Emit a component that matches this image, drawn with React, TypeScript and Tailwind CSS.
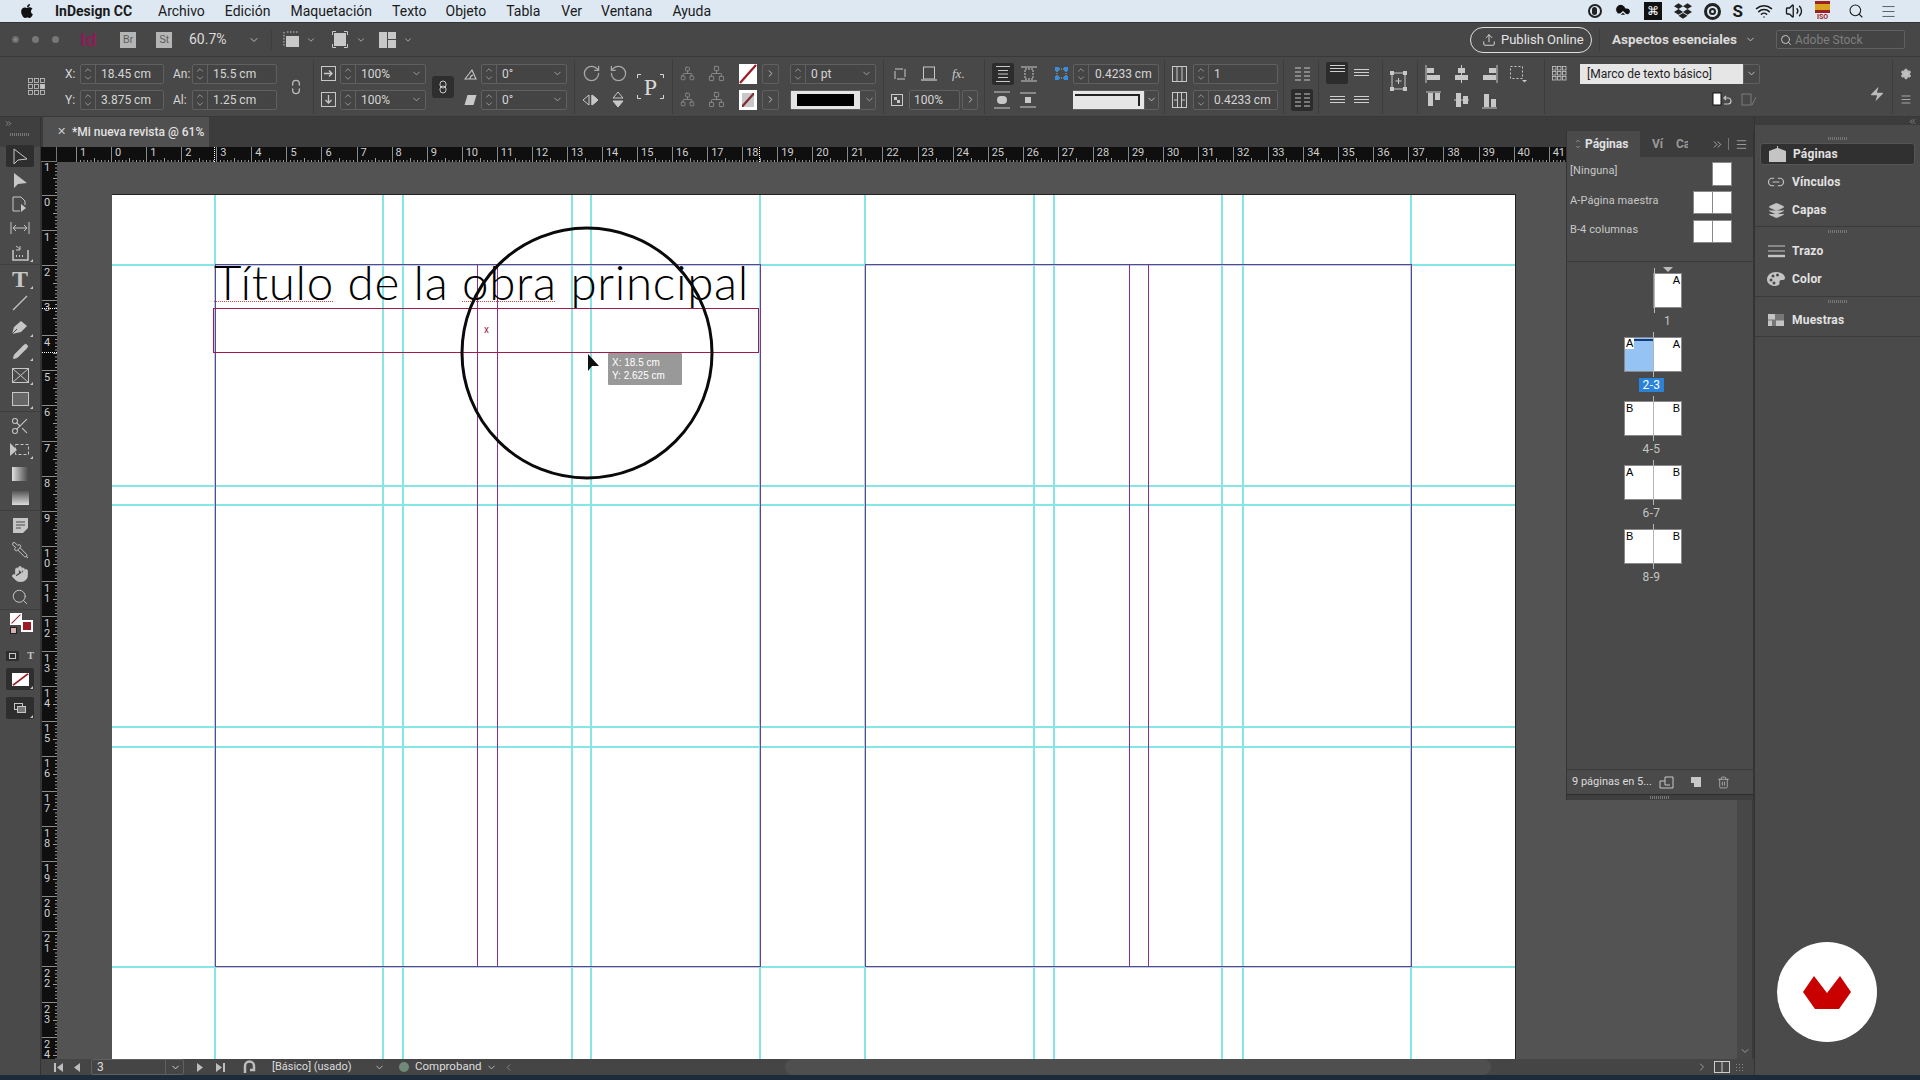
import React from "react";
import { FaApple, FaDropbox } from "react-icons/fa";
import {
  ChevronDown,
  ChevronRight,
  ChevronLeft,
  ChevronUp,
  ChevronsLeft,
  ChevronsRight,
  Search,
  Wifi,
  Volume2,
  Upload,
  Scissors,
  Hand,
  Pipette,
  Pencil,
  RotateCw,
  RotateCcw,
  Network,
  Settings,
  Zap,
  Menu,
  Trash2,
  CloudUpload,
  Unlink2,
  Layers,
  Link2,
} from "lucide-react";

const cyanV = [215, 383, 403, 572, 591, 760, 865, 1034, 1054, 1222, 1243, 1411];
const cyanH = [265, 486, 505, 727, 747, 967];
const purpleV = [215, 477, 497, 760, 865, 1129, 1148, 1411];
const menus = [
  ["Archivo", "ml-[20px]"],
  ["Edición", "ml-[20px]"],
  ["Maquetación", "ml-[20px]"],
  ["Texto", "ml-[20px]"],
  ["Objeto", "ml-[19px]"],
  ["Tabla", "ml-[20px]"],
  ["Ver", "ml-[21px]"],
  ["Ventana", "ml-[19px]"],
  ["Ayuda", "ml-[20px]"],
];

const Carets = () => (
  <div className="w-[15px] h-full border-r border-[#606060] flex flex-col items-center justify-center text-[#c4c4c4] shrink-0">
    <ChevronUp size={10} strokeWidth={1.5} className="-mb-[1px]" />
    <ChevronDown size={10} strokeWidth={1.5} className="-mt-[1px]" />
  </div>
);

const Field = ({ value, w, drop, pl = "pl-[5px]" }: { value: string; w: string; drop?: boolean; pl?: string }) => (
  <div className={`${w} h-[20px] flex items-center border border-[#606060] rounded-[2px] bg-[#444444] shrink-0`}>
    <Carets />
    <span className={`${pl} flex-1 text-[12px] text-[#d6d6d6] leading-none whitespace-nowrap`}>{value}</span>
    {drop && <ChevronDown size={11} strokeWidth={1.5} className="text-[#c4c4c4] mr-[3px]" />}
  </div>
);

const Col = ({ className, children, sep }: { className: string; children: React.ReactNode; sep?: boolean }) => (
  <div className={`${className} relative h-[46px] flex flex-col justify-between shrink-0`}>
    {sep && <div className="absolute -left-[8px] -top-[4px] -bottom-[4px] w-px bg-[#3d3d3d]" />}
    {children}
  </div>
);

const Row = ({ children, className = "" }: { children?: React.ReactNode; className?: string }) => (
  <div className={`h-[20px] flex items-center ${className}`}>{children}</div>
);

const Ico = ({ w = 16, h = 16, children, className = "" }: { w?: number; h?: number; children: React.ReactNode; className?: string }) => (
  <svg width={w} height={h} viewBox={`0 0 ${w} ${h}`} fill="none" stroke="currentColor" className={`shrink-0 ${className}`}>
    {children}
  </svg>
);

const NoneSwatch = ({ className }: { className: string }) => (
  <svg viewBox="0 0 18 20" className={className} preserveAspectRatio="none">
    <rect width="18" height="20" fill="#fff" />
    <line x1="1" y1="19" x2="17" y2="1" stroke="#9c1c26" strokeWidth="2.2" />
  </svg>
);

const RefPoint = () => (
  <Ico w={19} h={19} className="text-[#c8c8c8]">
    {[1, 7, 13].flatMap((y) =>
      [1, 7, 13].map((x) => <rect key={`${x}-${y}`} x={x + 0.5} y={y + 0.5} width="4" height="4" strokeWidth="0.8" fill={x === 13 && y === 7 ? "#c8c8c8" : "none"} />)
    )}
  </Ico>
);

const Lines = ({ top, dark }: { top?: boolean; dark?: boolean }) => (
  <div className={`w-[22px] h-[22px] flex flex-col items-center gap-[2px] ${top ? "justify-start pt-[3px]" : "justify-center"} rounded-[2px] ${dark ? "bg-[#2c2c2c]" : ""}`}>
    <div className="w-[15px] h-px bg-[#d0d0d0]" />
    <div className="w-[15px] h-px bg-[#d0d0d0]" />
    <div className="w-[15px] h-px bg-[#d0d0d0]" />
  </div>
);

const AlignIco = ({ variant }: { variant: number }) => (
  <Ico w={17} h={18} className="text-[#c8c8c8]">
    {variant === 0 && (<><line x1="1" y1="0" x2="1" y2="18" /><rect x="2" y="3" width="7" height="5" fill="currentColor" stroke="none" /><rect x="2" y="10" width="13" height="5" fill="currentColor" stroke="none" /></>)}
    {variant === 1 && (<><line x1="8.5" y1="0" x2="8.5" y2="18" /><rect x="5" y="3" width="7" height="5" fill="currentColor" stroke="none" /><rect x="2" y="10" width="13" height="5" fill="currentColor" stroke="none" /></>)}
    {variant === 2 && (<><line x1="16" y1="0" x2="16" y2="18" /><rect x="8" y="3" width="7" height="5" fill="currentColor" stroke="none" /><rect x="2" y="10" width="13" height="5" fill="currentColor" stroke="none" /></>)}
    {variant === 3 && (<><line x1="1" y1="1" x2="16" y2="1" /><rect x="3" y="2" width="5" height="13" fill="currentColor" stroke="none" /><rect x="10" y="2" width="5" height="7" fill="currentColor" stroke="none" /></>)}
    {variant === 4 && (<><line x1="1" y1="9" x2="16" y2="9" /><rect x="3" y="2" width="5" height="14" fill="currentColor" stroke="none" /><rect x="10" y="5" width="5" height="8" fill="currentColor" stroke="none" /></>)}
    {variant === 5 && (<><line x1="1" y1="17" x2="16" y2="17" /><rect x="3" y="3" width="5" height="13" fill="currentColor" stroke="none" /><rect x="10" y="8" width="5" height="8" fill="currentColor" stroke="none" /></>)}
  </Ico>
);

const MenuBar = () => (
  <div className="h-[22px] bg-[#dde8f2] flex items-center text-[14px] text-[#1a1a1a] shrink-0">
    <FaApple size={16} className="ml-[19px] text-[#111]" />
    <span className="ml-[20px] font-bold w-[83px] whitespace-nowrap">InDesign CC</span>
    {menus.map(([m, c]) => (
      <span key={m} className={c}>{m}</span>
    ))}
    <div className="ml-auto flex items-center text-[#1a1a1a] mr-[23px] gap-[12px]">
      <div className="w-[14px] h-[14px] rounded-full border-2 border-[#222] flex items-center justify-center"><div className="w-[5px] h-[8px] rounded-full bg-[#222]" /></div>
      <CloudUpload size={18} fill="#111" stroke="#dde8f2" strokeWidth={1.5} />
      <div className="w-[18px] h-[18px] bg-[#111] text-white text-[12px] flex items-center justify-center">⌘</div>
      <FaDropbox size={18} className="text-[#222]" />
      <div className="w-[17px] h-[17px] rounded-full border-[3px] border-[#222] flex items-center justify-center"><div className="w-[7px] h-[7px] rounded-full border-2 border-[#222]" /></div>
      <span className="text-[17px] font-bold leading-none">S</span>
      <Wifi size={18} strokeWidth={2} />
      <Volume2 size={18} strokeWidth={1.8} />
      <div className="w-[15px] h-[20px] flex flex-col items-center leading-none">
        <div className="w-[15px] h-[12px] bg-[#d9a520] border-y-[3px] border-[#a02020]" />
        <span className="text-[7px] font-bold text-[#a02020] mt-[1px]">ISO</span>
      </div>
      <Search size={16} strokeWidth={1.6} className="ml-[6px]" />
      <Menu size={17} strokeWidth={1.3} className="ml-[4px] text-[#555]" />
    </div>
  </div>
);

const Small = ({ children, className = "" }: { children: React.ReactNode; className?: string }) => (
  <div className={`w-[16px] h-[16px] bg-[#b5b5b5] text-[#5a5a5a] text-[10px] flex items-center justify-center font-['Liberation_Sans',sans-serif] ${className}`}>{children}</div>
);

const AppBar = () => (
  <div className="h-[35px] bg-[#474747] border-t border-[#333] border-b border-b-[#383838] flex items-center shrink-0">
    <div className="ml-[12px] w-[7px] h-[7px] rounded-full bg-[#8a8a8a] border-2 border-[#6e6e6e]" />
    <div className="ml-[13px] w-[7px] h-[7px] rounded-full bg-[#777]" />
    <div className="ml-[13px] w-[7px] h-[7px] rounded-full bg-[#777]" />
    <span className="ml-[21px] w-[20px] text-[19px] font-bold text-[#8c1d56] font-['Liberation_Sans',sans-serif] leading-none">Id</span>
    <Small className="ml-[20px]">Br</Small>
    <Small className="ml-[20px]">St</Small>
    <span className="ml-[17px] w-[40px] text-[14px] text-[#dcdcdc]">60.7%</span>
    <ChevronDown size={12} className="ml-[19px] text-[#bbb]" />
    <div className="ml-[11px] w-px h-[20px] bg-[#3d3d3d]" />
    <Ico w={17} h={17} className="ml-[11px] text-[#c8c8c8]">
      <rect x="3" y="5" width="13" height="11" fill="currentColor" stroke="none" />
      <path d="M1 1v15M4 1h12" strokeDasharray="1.5 1.5" />
    </Ico>
    <ChevronDown size={10} className="ml-[6px] text-[#bbb]" />
    <Ico w={16} h={17} className="ml-[16px] text-[#c8c8c8]">
      <rect x="2" y="2" width="12" height="13" fill="currentColor" stroke="none" />
      <path d="M0.5 4V.5H4M12 .5h3.5V4M15.5 13v3.5H12M4 16.5H.5V13" strokeWidth="1" />
    </Ico>
    <ChevronDown size={10} className="ml-[8px] text-[#bbb]" />
    <Ico w={17} h={16} className="ml-[13px] text-[#c8c8c8]">
      <rect x="0" y="0" width="8" height="16" fill="currentColor" stroke="none" />
      <rect x="9" y="0" width="8" height="7" fill="currentColor" stroke="none" />
      <rect x="9" y="8" width="8" height="8" fill="currentColor" stroke="none" />
    </Ico>
    <ChevronDown size={10} className="ml-[7px] text-[#bbb]" />
    <div className="ml-auto flex items-center">
      <div className="w-[122px] h-[26px] rounded-full border border-[#e0e0e0] flex items-center pl-[11px] gap-[5px] text-[13px] text-[#e4e4e4]">
        <Upload size={14} strokeWidth={1.5} />
        <span className="whitespace-nowrap">Publish Online</span>
      </div>
      <div className="ml-[7px] w-px h-[22px] bg-[#3d3d3d]" />
      <span className="ml-[12px] text-[13.5px] font-bold text-[#dcdcdc] whitespace-nowrap w-[124px]">Aspectos esenciales</span>
      <ChevronDown size={11} className="ml-[9px] text-[#ccc]" />
      <div className="ml-[20px] mr-[15px] w-[129px] h-[19px] border border-[#606060] rounded-[2px] bg-[#444] flex items-center pl-[3px] gap-[3px] text-[12px] text-[#7e7e7e]">
        <Search size={12} className="text-[#c8c8c8]" />
        <span>Adobe Stock</span>
      </div>
    </div>
  </div>
);

const ControlPanel = () => (
  <div className="h-[60px] bg-[#484848] border-b border-[#383838] flex items-center shrink-0 text-[#c8c8c8]">
    <div className="ml-[27px] w-[19px] shrink-0"><RefPoint /></div>
    <Col className="ml-[19px] w-[99px]">
      <Row><span className="w-[15px] text-[12px] text-[#d6d6d6]">X:</span><Field value="18.45 cm" w="w-[84px]" /></Row>
      <Row><span className="w-[15px] text-[12px] text-[#d6d6d6]">Y:</span><Field value="3.875 cm" w="w-[84px]" /></Row>
    </Col>
    <Col className="ml-[9px] w-[104px]">
      <Row><span className="w-[19px] text-[12px] text-[#d6d6d6]">An:</span><Field value="15.5 cm" w="w-[85px]" /></Row>
      <Row><span className="w-[19px] text-[12px] text-[#d6d6d6]">Al:</span><Field value="1.25 cm" w="w-[85px]" /></Row>
    </Col>
    <div className="ml-[11px] w-[15px] shrink-0"><Unlink2 size={16} strokeWidth={2} className="rotate-90 text-[#bbb]" /></div>
    <Col className="ml-[18px] w-[105px]" sep>
      <Row>
        <Ico w={15} h={15} className="mr-[4px]"><rect x=".5" y=".5" width="14" height="14" strokeWidth="1" /><path d="M3 7.5h8M8 4.5l3 3-3 3" strokeWidth="1.3" /></Ico>
        <Field value="100%" w="w-[86px]" drop />
      </Row>
      <Row>
        <Ico w={15} h={15} className="mr-[4px]"><rect x=".5" y=".5" width="14" height="14" strokeWidth="1" /><path d="M7.5 3v8M4.5 8l3 3 3-3" strokeWidth="1.3" /></Ico>
        <Field value="100%" w="w-[86px]" drop />
      </Row>
    </Col>
    <div className="ml-[6px] w-[22px] h-[22px] bg-[#2e2e2e] rounded-[3px] flex items-center justify-center shrink-0">
      <Ico w={8} h={14} className="text-[#c8c8c8]"><rect x="1" y="1" width="6" height="7" rx="3" /><rect x="1" y="6" width="6" height="7" rx="3" /></Ico>
    </div>
    <Col className="ml-[10px] w-[103px]">
      <Row>
        <Ico w={13} h={12} className="mr-[4px]"><path d="M1 11h11L8 2zM6 11a4 4 0 0 1 3-4" strokeWidth="1.1" /></Ico>
        <Field value="0°" w="w-[86px]" drop />
      </Row>
      <Row>
        <Ico w={13} h={12} className="mr-[4px]"><path d="M3.5 1h9L9.5 11h-9z" fill="currentColor" stroke="none" /></Ico>
        <Field value="0°" w="w-[86px]" drop />
      </Row>
    </Col>
    <Col className="ml-[15px] w-[46px]" sep>
      <Row className="justify-between text-[#a8a8a8]"><RotateCw size={19} strokeWidth={1.6} /><RotateCcw size={19} strokeWidth={1.6} /></Row>
      <Row className="justify-between">
        <Ico w={17} h={14}><path d="M7 2v10L1 7zM10 2v10l6-5z" strokeWidth="1" /><path d="M10 2v10l6-5z" fill="currentColor" /></Ico>
        <Ico w={14} h={17} className="mr-[3px]"><path d="M2 7h10L7 1z" strokeWidth="1" /><path d="M2 10h10l-5 6z" fill="currentColor" /></Ico>
      </Row>
    </Col>
    <div className="ml-[9px] w-[27px] h-[25px] relative flex items-center justify-center text-[24px] leading-none text-[#d8d8d8] font-['Liberation_Serif',serif] border-0 shrink-0">
      P
      <Ico w={27} h={25} className="absolute inset-0"><path d="M.5 4V.5H4M23 .5h3.5V4M26.5 21v3.5H23M4 24.5H.5V21" /></Ico>
    </div>
    <Col className="ml-[16px] w-[45px]" sep>
      <Row className="justify-between text-[#8a8a8a]"><Network size={15} strokeWidth={1.4} /><Network size={17} strokeWidth={1.4} /></Row>
      <Row className="justify-between text-[#8a8a8a]"><Network size={15} strokeWidth={1.4} /><Network size={17} strokeWidth={1.4} /></Row>
    </Col>
    <Col className="ml-[14px] w-[40px]">
      <Row className="justify-between">
        <NoneSwatch className="w-[18px] h-[20px]" />
        <div className="w-[17px] h-[20px] border border-[#606060] rounded-[2px] flex items-center justify-center"><ChevronRight size={11} /></div>
      </Row>
      <Row className="justify-between">
        <div className="w-[18px] h-[20px] border-[3px] border-white bg-[#484848] relative overflow-hidden"><NoneSwatch className="w-[18px] h-[20px] -m-[3px] opacity-70" /></div>
        <div className="w-[17px] h-[20px] border border-[#606060] rounded-[2px] flex items-center justify-center"><ChevronRight size={11} /></div>
      </Row>
    </Col>
    <Col className="ml-[11px] w-[86px]">
      <Field value="0 pt" w="w-[86px]" drop />
      <div className="h-[20px] flex items-center border border-[#606060] rounded-[2px]">
        <div className="w-[70px] h-full bg-[#e4e4e4] flex items-center justify-center"><div className="w-[57px] h-[12px] bg-black" /></div>
        <ChevronDown size={11} strokeWidth={1.5} className="ml-[4px]" />
      </div>
    </Col>
    <Col className="ml-[15px] w-[87px]" sep>
      <Row className="pl-[3px]">
        <Ico w={12} h={14}><rect x="1" y="2" width="10" height="10" strokeDasharray="8 2" /></Ico>
        <Ico w={16} h={15} className="ml-[15px]"><rect x="2.5" y="1" width="11" height="12" /><path d="M0 14h16" stroke="#999" strokeWidth="2" /></Ico>
        <span className="ml-[15px] text-[13px] italic font-['Liberation_Serif',serif]">fx.</span>
      </Row>
      <Row>
        <Ico w={12} h={12} className="mr-[6px]"><rect x=".5" y=".5" width="11" height="11" /><path d="M3 3h3v3H3zM6 6h3v3H6z" fill="currentColor" stroke="none" /></Ico>
        <div className="w-[51px] h-[20px] border border-[#606060] rounded-[2px] bg-[#444] pl-[4px] text-[12px] leading-[18px] text-[#d6d6d6]">100%</div>
        <div className="ml-[2px] w-[16px] h-[20px] border border-[#606060] rounded-[2px] flex items-center justify-center"><ChevronRight size={11} /></div>
      </Row>
    </Col>
    <Col className="ml-[14px] w-[45px]" sep>
      <Row className="gap-[7px]">
        <div className="w-[22px] h-[22px] rounded-[2px] bg-[#2c2c2c] flex items-center justify-center">
          <Ico w={14} h={16}><path d="M0 .5h14M0 15.5h14M2 4.5h10M2 8h10M2 11.5h10" /></Ico>
        </div>
        <Ico w={16} h={16}><path d="M0 1h16M0 15h16" /><rect x="4" y="3" width="8" height="10" strokeDasharray="2 1" /></Ico>
      </Row>
      <Row className="gap-[7px] pl-[2px]">
        <Ico w={16} h={18} className="mr-[3px]"><path d="M0 1h16M0 17h16" /><rect x="3" y="5" width="10" height="8" rx="4" fill="currentColor" stroke="none" /></Ico>
        <Ico w={16} h={16}><path d="M0 1h16M0 15h16" /><rect x="5" y="5" width="6" height="6" fill="currentColor" stroke="none" /></Ico>
      </Row>
    </Col>
    <Col className="ml-[17px] w-[105px]">
      <Row>
        <Ico w={15} h={15} className="mr-[4px] text-[#2f8fe6]"><path d="M1 1h4v4H1zM10 1h4v4h-4zM1 10h4v4H1zM10 10h4v4h-4z" fill="currentColor" stroke="none" /><path d="M3 5v5M12 5v5M5 3h5M5 12h5" stroke="#aaa" strokeDasharray="1 1" /></Ico>
        <Field value="0.4233 cm" w="w-[86px]" pl="pl-[6px]" />
      </Row>
      <Row className="pl-[19px]">
        <div className="w-[71px] h-[20px] bg-[#e6e6e6] border-y border-[#606060] relative">
          <div className="absolute left-[2px] right-[4px] top-[3px] h-[2px] bg-[#222]" />
          <div className="absolute right-[4px] top-[3px] bottom-[3px] w-[2px] bg-[#222]" />
        </div>
        <div className="w-[15px] h-[20px] border border-[#606060] rounded-r-[2px] flex items-center justify-center"><ChevronDown size={11} /></div>
      </Row>
    </Col>
    <Col className="ml-[13px] w-[106px]" sep>
      <Row>
        <Ico w={15} h={16} className="mr-[6px]"><rect x=".5" y=".5" width="14" height="15" /><path d="M5 .5v15M10 .5v15" /></Ico>
        <Field value="1" w="w-[85px]" />
      </Row>
      <Row>
        <Ico w={15} h={16} className="mr-[6px]"><rect x=".5" y=".5" width="14" height="15" /><path d="M5.5 .5v15M9.5 .5v15M2 8h3M10 8h3" /></Ico>
        <Field value="0.4233 cm" w="w-[85px]" />
      </Row>
    </Col>
    <Col className="ml-[13px] w-[22px]" sep>
      <Row className="justify-center"><Ico w={15} h={14}><path d="M0 1h6M9 1h6M0 5h6M9 5h6M0 9h6M9 9h6M0 13h6M9 13h6" /></Ico></Row>
      <Row className="justify-center">
        <div className="w-[22px] h-[22px] rounded-[2px] bg-[#2c2c2c] flex items-center justify-center"><Ico w={15} h={14}><path d="M0 1h6M9 1h6M0 5h6M9 5h6M0 9h6M9 9h6M0 13h6M9 13h6" /></Ico></div>
      </Row>
    </Col>
    <Col className="ml-[13px] w-[46px]" sep>
      <Row className="justify-between items-end"><Lines top dark /><Lines /></Row>
      <Row className="justify-between"><Lines /><Lines /></Row>
    </Col>
    <Col className="ml-[18px] w-[17px]" sep>
      <Row className="h-[30px] mt-[2px]">
        <Ico w={17} h={24}><rect x="2" y="4" width="13" height="16" /><rect x="0" y="2" width="4" height="4" fill="currentColor" stroke="none" /><rect x="13" y="2" width="4" height="4" fill="currentColor" stroke="none" /><rect x="0" y="18" width="4" height="4" fill="currentColor" stroke="none" /><rect x="13" y="18" width="4" height="4" fill="currentColor" stroke="none" /><path d="M8.5 9v6M5.5 12h6" /></Ico>
      </Row>
    </Col>
    <Col className="ml-[18px] w-[101px]" sep>
      <Row className="gap-[11px]">
        <AlignIco variant={0} />
        <AlignIco variant={1} />
        <AlignIco variant={2} />
        <Ico w={18} h={18}><rect x="1.5" y="1.5" width="12" height="12" strokeDasharray="2 2" /><path d="M13 15l2.5 2.5L18 15z" fill="currentColor" stroke="none" /></Ico>
      </Row>
      <Row className="gap-[11px]">
        <AlignIco variant={3} />
        <AlignIco variant={4} />
        <AlignIco variant={5} />
      </Row>
    </Col>
    <Col className="ml-[26px] w-[208px]" sep>
      <Row>
        <div className="w-[28px]"><Ico w={15} h={15}>{[0, 5, 10].flatMap((y) => [0, 5, 10].map((x) => <rect key={`${x}${y}`} x={x + 0.5} y={y + 0.5} width="3.5" height="3.5" strokeWidth="0.8" />))}</Ico></div>
        <div className="w-[163px] h-[20px] bg-[#e6e6e6] text-[12px] text-[#222] pl-[7px] leading-[20px] whitespace-nowrap">[Marco de texto básico]</div>
        <div className="w-[17px] h-[20px] border border-[#606060] rounded-r-[2px] flex items-center justify-center"><ChevronDown size={11} /></div>
      </Row>
      <Row className="justify-end gap-[9px] pr-[3px]">
        <Ico w={20} h={16}><rect x="1" y="1" width="8" height="12" fill="#fff" stroke="#111" /><path d="M12 12h4a3 3 0 0 0 0-6h-3M14 4l-2 2 2 2" strokeWidth="1.2" /></Ico>
        <Ico w={16} h={16} className="text-[#7a7a7a]"><rect x="1" y="2" width="9" height="11" /><path d="M11 13l4-8" /></Ico>
      </Row>
    </Col>
    <div className="ml-[112px] w-[10px] shrink-0 mt-[14px]"><Zap size={16} fill="#bbb" strokeWidth={0} className="-ml-[3px]" /></div>
    <Col className="ml-[18px] w-[12px]" sep>
      <Row className="justify-center"><Settings size={14} fill="#bbb" strokeWidth={1.5} /></Row>
      <Row className="justify-center"><Menu size={15} strokeWidth={1.5} /></Row>
    </Col>
  </div>
);

const Tool = ({ children, active, corner, className = "" }: { children: React.ReactNode; active?: boolean; corner?: boolean; className?: string }) => (
  <div className={`relative w-[28px] h-[22px] flex items-center justify-center text-[#c6c6c6] rounded-[2px] ${active ? "bg-[#2e2e2e]" : ""} ${className}`}>
    {children}
    {corner && <div className="absolute right-[1px] bottom-[1px] w-0 h-0 border-l-[3px] border-l-transparent border-b-[3px] border-b-[#c6c6c6]" />}
  </div>
);

const ToolSep = () => <div className="w-full h-px bg-[#3e3e3e] my-[1px]" />;

const Toolbar = () => (
  <div className="w-[41px] bg-[#4a4a4a] border-r border-[#343434] flex flex-col items-center shrink-0">
    <div className="h-[30px] w-full bg-[#3f3f3f] relative flex flex-col items-center">
      <ChevronsRight size={9} className="self-start ml-[4px] mt-[2px] text-[#999]" />
      <div className="w-[20px] h-[3px] mt-[5px] border-x-0 bg-[repeating-linear-gradient(90deg,#777_0,#777_1px,transparent_1px,transparent_2px)]" />
    </div>
    <div className="flex flex-col items-center mt-[-2px] w-full">
      <Tool active><Ico w={16} h={17}><path d="M2 1v15l4-4 9-1z" strokeWidth="1" /></Ico></Tool>
      <Tool className="mt-[2px]"><Ico w={16} h={17}><path d="M2 1v15l4-4 9-1z" fill="currentColor" stroke="none" /></Ico></Tool>
      <Tool className="mt-[2px]"><Ico w={16} h={17}><path d="M1 1h8l4 4v4M1 1v14h7" /><path d="M9 8v8l5-4z" fill="currentColor" stroke="none" /></Ico></Tool>
      <Tool className="mt-[2px]"><Ico w={20} h={14}><path d="M1 1v12M19 1v12M3 7h14M6 4L3 7l3 3M14 4l3 3-3 3" /></Ico></Tool>
      <Tool corner className="mt-[2px]"><Ico w={17} h={17}><path d="M1 6v10h15V6" strokeWidth="1.5" /><path d="M4 2l4 3M8 2v4H4" /><path d="M4 12h1M7 12h1M10 12h1" strokeWidth="2" /></Ico></Tool>
      <ToolSep />
      <Tool corner className="mt-[2px]"><span className="text-[24px] font-bold leading-none font-['Liberation_Serif',serif]">T</span></Tool>
      <Tool className="mt-[2px]"><Ico w={16} h={16}><line x1="1" y1="15" x2="15" y2="1" strokeWidth="1.2" /></Ico></Tool>
      <Tool corner className="mt-[2px]"><Ico w={18} h={16}><path d="M1 15l2-7 7-6 6 5-6 6z" fill="currentColor" stroke="none" /><path d="M1 15l5-5" stroke="#4a4a4a" /></Ico></Tool>
      <Tool corner className="mt-[2px]"><Pencil size={17} fill="#c6c6c6" strokeWidth={1.2} /></Tool>
      <Tool corner className="mt-[2px]"><Ico w={17} h={15}><rect x=".5" y=".5" width="16" height="14" /><path d="M.5 .5l16 14M16.5 .5l-16 14" /></Ico></Tool>
      <Tool corner className="mt-[2px]"><Ico w={17} h={14}><rect x=".5" y=".5" width="16" height="13" fill="#666" /></Ico></Tool>
      <ToolSep />
      <Tool className="mt-[2px]"><Scissors size={20} strokeWidth={1.3} /></Tool>
      <Tool corner className="mt-[1px]"><Ico w={20} h={15}><path d="M0 1v13l7-6z" fill="currentColor" stroke="none" /><rect x="5.5" y="2.5" width="13" height="10" strokeDasharray="3 2" /></Ico></Tool>
      <Tool className="mt-[3px]"><div className="w-[17px] h-[14px] bg-gradient-to-r from-[#e0e0e0] to-[#444]" /></Tool>
      <Tool className="mt-[2px]"><div className="w-[17px] h-[14px] bg-gradient-to-b from-[#555] via-[#999] to-[#ddd]" /></Tool>
      <ToolSep />
      <Tool className="mt-[2px]"><Ico w={15} h={15}><path d="M0 0h15v10l-5 5H0z" fill="currentColor" stroke="none" /><path d="M3 4h9M3 7h9M3 10h5" stroke="#4a4a4a" /></Ico></Tool>
      <Tool className="mt-[3px]"><Pipette size={18} strokeWidth={1.3} className="scale-x-[-1]" /></Tool>
      <Tool className="mt-[2px]"><Hand size={18} fill="#c6c6c6" strokeWidth={1} /></Tool>
      <Tool className="mt-[1px]"><Search size={18} strokeWidth={1.3} /></Tool>
      <ToolSep />
      <div className="relative w-[28px] h-[24px] mt-[2px]">
        <NoneSwatch className="absolute left-[4px] top-0 w-[12px] h-[12px] border border-white" />
        <div className="absolute left-[15px] top-[7px] w-[12px] h-[12px] border-[2px] border-white bg-[#9c1c26]" />
        <div className="absolute left-[4px] top-[14px] w-[7px] h-[7px] bg-[#d8b0b0] border border-[#222]" />
      </div>
      <div className="flex w-[28px] mt-[14px] h-[10px] items-center gap-[8px]">
        <div className="w-[14px] h-[10px] bg-[#2e2e2e] flex items-center justify-center"><div className="w-[7px] h-[6px] border border-[#c6c6c6]" /></div>
        <span className="text-[10px] font-bold text-[#c6c6c6] font-['Liberation_Serif',serif] leading-none">T</span>
      </div>
      <Tool corner active className="mt-[7px]"><NoneSwatch className="w-[17px] h-[13px]" /></Tool>
      <Tool corner active className="mt-[7px]"><Ico w={12} h={10}><rect x=".5" y=".5" width="8" height="6" /><rect x="3.5" y="3.5" width="8" height="6" fill="#777" /></Ico></Tool>
    </div>
  </div>
);

const HRuler = () => (
  <div className="h-[15px] bg-[#0f0f0f] flex shrink-0 overflow-hidden text-[#d0d0d0] relative">
    <div className="w-[16px] shrink-0 border-r border-[#777] border-b border-b-[#777]" />
    <div className="w-[19px] shrink-0" />
    {Array.from({ length: 43 }, (_, i) => i - 1).map((n) => (
      <div key={n} className="w-[35.07px] shrink-0 border-l border-[#8a8a8a] relative">
        <span className="absolute left-[3px] -top-[1px] text-[11px] leading-[14px]">{Math.abs(n)}</span>
        <svg width="35" height="4" className="absolute bottom-0 left-0" stroke="#9a9a9a">
          {[3.5, 7, 10.5, 14, 17.5, 21, 24.5, 28, 31.5].map((x) => (
            <line key={x} x1={x} x2={x} y1={x === 17.5 ? 0 : 2} y2={4} />
          ))}
        </svg>
      </div>
    ))}
    <div className="absolute left-[173px] top-0 bottom-0 w-px border-l border-dotted border-white" />
    <div className="absolute left-[718px] top-0 bottom-0 w-px border-l border-dotted border-white" />
  </div>
);

const VRuler = () => (
  <div className="w-[16px] bg-[#0f0f0f] flex flex-col shrink-0 overflow-hidden text-[#d0d0d0] relative border-l border-[#343434]">
    {Array.from({ length: 26 }, (_, i) => i - 1).map((n) => (
      <div key={n} className={`h-[35.07px] shrink-0 border-t border-[#8a8a8a] relative ${n === -1 ? "-mt-[2px]" : ""}`}>
        <div className="absolute left-[1px] top-[2px] flex flex-col items-center text-[11px] leading-[10px] w-[8px]">
          {String(Math.abs(n)).split("").map((d, i) => (
            <span key={i}>{d}</span>
          ))}
        </div>
        <svg width="4" height="35" className="absolute right-0 top-0" stroke="#9a9a9a">
          {[3.5, 7, 10.5, 14, 17.5, 21, 24.5, 28, 31.5].map((y) => (
            <line key={y} y1={y} y2={y} x1={y === 17.5 ? 0 : 2} x2={4} />
          ))}
        </svg>
      </div>
    ))}
    <div className="absolute left-0 right-0 top-[146px] h-px border-t border-dotted border-white" />
    <div className="absolute left-0 right-0 top-[190px] h-px border-t border-dotted border-white" />
  </div>
);

const Page = () => (
  <div className="absolute left-[55px] top-[32px] w-[1404px] h-[901px] bg-white border-t border-r border-[#222]">
    {cyanV.map((x) => (
      <div key={x} className="absolute top-0 bottom-0 w-[2px] bg-[#86e6e6]" style={{ left: x - 113 }} />
    ))}
    {cyanH.map((y) => (
      <div key={y} className="absolute left-0 right-0 h-[2px] bg-[#86e6e6]" style={{ top: y - 196 }} />
    ))}
    {purpleV.map((x) => (
      <div key={x} className="absolute w-px bg-[#8b2f8f] top-[69px] h-[703px]" style={{ left: x - 112 }} />
    ))}
    <div className="absolute left-[103px] top-[69px] w-[546px] h-px bg-[#8b2f8f]" />
    <div className="absolute left-[753px] top-[69px] w-[547px] h-px bg-[#8b2f8f]" />
    <div className="absolute left-[103px] top-[771px] w-[546px] h-px bg-[#8b2f8f]" />
    <div className="absolute left-[753px] top-[771px] w-[547px] h-px bg-[#8b2f8f]" />
    <div className="absolute left-[101px] top-[113px] w-[546px] h-[45px] border border-[#a01b4e]" />
    <span className="absolute left-[372px] top-[130px] text-[10px] leading-none text-[#a01b4e]">x</span>
    <div className="absolute left-[102px] top-[59px] whitespace-nowrap text-[47.5px] leading-[56px] tracking-[0.7px] font-['Lato',sans-serif] font-light text-black">
      <span className="underline decoration-dotted decoration-[#d04848] decoration-1 underline-offset-[1px]">Título</span> de la{" "}
      <span className="underline decoration-dotted decoration-[#d04848] decoration-1 underline-offset-[1px]">obra</span> principal
    </div>
    <svg width="256" height="256" className="absolute left-[347px] top-[30px]" fill="none" stroke="#0a0a0a" strokeWidth="3">
      <circle cx="128" cy="128" r="125" />
    </svg>
    <svg width="13" height="19" className="absolute left-[475px] top-[159px]">
      <path d="M1 0v17l4-5h7z" fill="#111" />
    </svg>
    <div className="absolute left-[496px] top-[158px] w-[74px] h-[32px] bg-[#999] rounded-[1px] pl-[4px] pt-[3px] text-[10px] leading-[13px] text-white font-['Liberation_Sans',sans-serif]">
      <div>X: 18.5 cm</div>
      <div>Y: 2.625 cm</div>
    </div>
  </div>
);

const StatusBar = () => (
  <div className="h-[16px] bg-[#454545] flex items-center shrink-0 text-[#bdbdbd]">
    <Ico w={9} h={9} className="ml-[13px]"><path d="M1 0v9" strokeWidth="2" /><path d="M9 0v9L3 4.5z" fill="currentColor" stroke="none" /></Ico>
    <Ico w={6} h={9} className="ml-[11px]"><path d="M6 0v9L0 4.5z" fill="currentColor" stroke="none" /></Ico>
    <div className="ml-[11px] w-[93px] h-[16px] flex border border-[#606060] rounded-[2px] text-[12px] leading-[14px] text-[#ddd]">
      <span className="w-[74px] pl-[5px] border-r border-[#606060]">3</span>
      <ChevronDown size={11} className="ml-[4px] mt-[2px]" />
    </div>
    <Ico w={6} h={9} className="ml-[13px]"><path d="M0 0v9l6-4.5z" fill="currentColor" stroke="none" /></Ico>
    <Ico w={9} h={9} className="ml-[13px]"><path d="M0 0v9l6-4.5z" fill="currentColor" stroke="none" /><path d="M8 0v9" strokeWidth="2" /></Ico>
    <Ico w={14} h={14} className="ml-[17px]"><path d="M3 13V6a4.5 4.5 0 0 1 9 0v4H8" strokeWidth="2.5" /></Ico>
    <span className="ml-[16px] w-[102px] text-[11px] text-[#ddd] whitespace-nowrap">[Básico] (usado)</span>
    <ChevronDown size={11} />
    <div className="ml-[14px] w-[10px] h-[10px] rounded-full bg-[#6f8a78]" />
    <span className="ml-[6px] w-[67px] overflow-hidden text-[11.5px] text-[#ddd] whitespace-nowrap">Comprobando</span>
    <ChevronDown size={11} className="ml-[4px]" />
    <ChevronLeft size={11} className="ml-[6px] text-[#888]" />
    <div className="ml-[271px] w-[706px] h-full bg-[#4f4f4f] rounded-full" />
    <ChevronRight size={12} className="ml-[205px] text-[#999]" />
    <Ico w={16} h={12} className="ml-[6px] text-[#ccc]"><rect x=".5" y=".5" width="15" height="11" /><path d="M8 .5v11" /></Ico>
    <div className="ml-[5px] w-[9px] h-[9px] bg-[radial-gradient(#888_1px,transparent_1px)] bg-[length:3px_3px]" />
  </div>
);

const DockItem = ({ icon, label, active }: { icon: React.ReactNode; label: string; active?: boolean }) => (
  <div className={`h-[22px] mx-[5px] my-[3px] flex items-center rounded-[3px] text-[#e2e2e2] ${active ? "bg-[#303030] border border-[#555]" : ""}`}>
    <div className="w-[32px] flex justify-center text-[#c4c4c4] shrink-0">{icon}</div>
    <span className="text-[12px] font-bold tracking-[0.2px]">{label}</span>
  </div>
);

const Grip = () => (
  <div className="h-[3px] w-[20px] mx-auto mt-[3px] bg-[repeating-linear-gradient(90deg,#777_0,#777_1px,transparent_1px,transparent_2px)]" />
);

const Dock = () => (
  <div className="w-[166px] shrink-0 flex flex-col border-l border-[#333]">
    <div className="h-[8px] bg-[#3c3c3c] flex justify-end items-start pr-[3px]">
      <ChevronsLeft size={9} className="text-[#999]" />
    </div>
    <div className="flex-1 bg-[#4a4a4a] flex flex-col relative">
      <div className="flex flex-col pt-[9px] border-b border-[#3a3a3a] pb-[2px]">
        <Grip />
        <DockItem active label="Páginas" icon={<Ico w={17} h={16}><path d="M0 5l8-3v14H0zM17 5L9 2v14h8z" fill="currentColor" stroke="none" /><path d="M8.5 0v16" /></Ico>} />
        <DockItem label="Vínculos" icon={<Link2 size={18} strokeWidth={1.6} />} />
        <DockItem label="Capas" icon={<Layers size={17} fill="#c4c4c4" strokeWidth={1} />} />
      </div>
      <div className="flex flex-col border-b border-[#3a3a3a] pb-[3px]">
        <Grip />
        <div className="h-[4px]" />
        <DockItem label="Trazo" icon={<Ico w={17} h={13}><path d="M0 1h17M0 6h17" /><path d="M0 11h17" strokeWidth="2.4" /></Ico>} />
        <DockItem label="Color" icon={<svg width="18" height="14" viewBox="0 0 18 14"><path d="M9 0c5 0 9 2.500 9 6 0 2-2 2-3.500 2S12 9 12.500 11c.3 2-2 3-4.500 3C4 14 0 11.500 0 7.500 0 3 4 0 9 0z" fill="#c4c4c4" /><circle cx="4" cy="8" r="1.500" fill="#4a4a4a" /><circle cx="6" cy="4" r="1.500" fill="#4a4a4a" /><circle cx="10.500" cy="3" r="1.500" fill="#4a4a4a" /><circle cx="7" cy="11" r="1.500" fill="#4a4a4a" /></svg>} />
      </div>
      <div className="flex flex-col border-b border-[#3a3a3a] pb-[2px]">
        <Grip />
        <div className="h-[3px]" />
        <DockItem label="Muestras" icon={<Ico w={16} h={12}><rect width="16" height="12" fill="#777" stroke="none" /><rect x="0" y="0" width="7" height="5.5" fill="#c4c4c4" stroke="none" /><rect x="8" y="6.5" width="8" height="5.5" fill="#c4c4c4" stroke="none" /><rect x="0" y="6.5" width="4" height="5.5" fill="#c4c4c4" stroke="none" /></Ico>} />
      </div>
      <div className="absolute left-[22px] top-[817px] w-[100px] h-[100px] rounded-full bg-white flex items-center justify-center">
        <svg width="48" height="33" viewBox="0 0 48 33"><path d="M0 16L11 0l13 17L37 0l11 16-12 17H12z" fill="#c80000" /></svg>
      </div>
    </div>
  </div>
);

const Spread = ({ left, right, label, active, single }: { left?: string; right: string; label: string; active?: boolean; single?: boolean }) => (
  <div className="flex flex-col mb-[9px]">
    <div className={`relative h-[35px] ${single ? "ml-[86px] w-[29px]" : "ml-[57px] w-[58px]"} bg-white border border-[#888] flex text-[11px] leading-[11px] text-black font-['Liberation_Sans',sans-serif]`}>
      {active && <div className="w-[28px] h-full bg-[#94c3f4] relative"><div className="absolute left-[8px] right-0 top-[1px] h-[2px] bg-[#123d78]" /><span className="absolute left-0 top-0 bg-white px-[1px]">{left}</span></div>}
      {!active && left && <span className="absolute left-[1px] top-[1px]">{left}</span>}
      <span className="absolute right-[1px] top-[1px]">{right}</span>
      <div className={`absolute -top-[6px] -bottom-[6px] w-px bg-[#b5b5b5] ${single ? "left-0" : "left-[28px]"}`} />
    </div>
    <div className="h-[14px] mt-[6px] relative text-[12px] leading-[14px] text-center">
      <span className={`absolute left-[72px] w-[25px] tracking-[0.4px] ${single ? "left-[86px] w-[29px]" : ""} ${active ? "bg-[#2a83d8] text-white" : "text-[#c4c4c4]"}`}>{label}</span>
    </div>
  </div>
);

const PagesPanel = () => (
  <div className="absolute left-[1566px] top-[131px] w-[188px] h-[669px] bg-[#4a4a4a] border-l border-r border-[#343434] flex flex-col z-10">
    <div className="h-[26px] bg-[#3c3c3c] flex items-center text-[12px] shrink-0">
      <div className="w-[73px] h-full bg-[#4a4a4a] flex items-center pl-[8px] gap-[4px] font-bold text-[#e0e0e0]">
        <div className="flex flex-col text-[#aaa]"><ChevronUp size={6} strokeWidth={3} /><ChevronDown size={6} strokeWidth={3} /></div>
        Páginas
      </div>
      <span className="ml-[12px] w-[13px] font-bold text-[#999] overflow-hidden">Ví</span>
      <span className="ml-[11px] w-[12px] font-bold text-[#999] overflow-hidden">Ca</span>
      <ChevronsRight size={13} strokeWidth={1.4} className="ml-[23px] text-[#ccc]" />
      <div className="ml-[4px] w-px h-[12px] bg-[#777]" />
      <Menu size={13} strokeWidth={1.2} className="ml-[6px] text-[#ccc]" />
    </div>
    <div className="h-[105px] border-b border-[#3a3a3a] shrink-0 text-[11px] text-[#c8c8c8] tracking-[0.1px]">
      <div className="flex items-center justify-between pl-[3px] pr-[21px] mt-[5px] h-[24px]">
        <span className="mb-[5px]">[Ninguna]</span>
        <div className="w-[20px] h-[24px] bg-white border border-[#888]" />
      </div>
      <div className="flex items-center justify-between pl-[3px] pr-[21px] mt-[5px] h-[23px]">
        <span className="mb-[3px]">A-Página maestra</span>
        <div className="w-[39px] h-[23px] bg-white border border-[#888] flex justify-center"><div className="w-px bg-[#888]" /></div>
      </div>
      <div className="flex items-center justify-between pl-[3px] pr-[21px] mt-[6px] h-[23px]">
        <span className="mb-[3px]">B-4 columnas</span>
        <div className="w-[39px] h-[23px] bg-white border border-[#888] flex justify-center"><div className="w-px bg-[#888]" /></div>
      </div>
    </div>
    <div className="flex-1 pt-[11px] relative">
      <div className="absolute left-[96px] top-[5px] w-0 h-0 border-x-[5px] border-x-transparent border-t-[5px] border-t-[#bbb]" />
      <Spread single right="A" label="1" />
      <Spread active left="A" right="A" label="2-3" />
      <Spread left="B" right="B" label="4-5" />
      <Spread left="A" right="B" label="6-7" />
      <Spread left="B" right="B" label="8-9" />
    </div>
    <div className="h-[25px] border-t border-[#3a3a3a] flex items-center text-[#c8c8c8] shrink-0">
      <span className="ml-[5px] w-[87px] text-[11px] whitespace-nowrap text-[#dcdcdc]">9 páginas en 5...</span>
      <Ico w={15} h={13}><path d="M1 12V5h5V1h8v11zM6 5v4h5" /></Ico>
      <Ico w={10} h={10} className="ml-[17px]"><path d="M0 0h10v10H3V6H0z" fill="currentColor" stroke="none" /></Ico>
      <Trash2 size={13} strokeWidth={1.3} className="ml-[16px]" />
    </div>
    <div className="h-[6px] bg-[#3f3f3f] border-t border-[#2e2e2e] shrink-0 flex justify-center pt-[1px]">
      <div className="w-[20px] h-[3px] bg-[repeating-linear-gradient(90deg,#777_0,#777_1px,transparent_1px,transparent_2px)]" />
    </div>
  </div>
);

const App = () => (
  <div className="relative w-[1920px] h-[1080px] overflow-hidden flex flex-col font-['Roboto',sans-serif] bg-[#1c2a3a]">
    <MenuBar />
    <AppBar />
    <ControlPanel />
    <div className="flex h-[958px] shrink-0">
      <Toolbar />
      <div className="flex-1 flex flex-col min-w-0">
        <div className="h-[30px] bg-[#3c3c3c] flex shrink-0">
          <div className="ml-[2px] w-[166px] h-full bg-[#505050] flex items-center text-[12px] text-[#e2e2e2]">
            <span className="ml-[14px] text-[11px] text-[#ccc]">✕</span>
            <span className="ml-[6px] font-medium whitespace-nowrap">*Mi nueva revista @ 61%</span>
          </div>
        </div>
        <HRuler />
        <div className="flex-1 flex min-h-0">
          <VRuler />
          <div className="flex-1 relative bg-[#535353] overflow-hidden">
            <Page />
          </div>
          <div className="w-[15px] bg-[#474747] shrink-0 flex flex-col justify-end items-center pb-[2px] text-[#999]">
            <ChevronDown size={12} />
          </div>
          <div className="w-[2px] bg-[#3a3a3a] shrink-0" />
        </div>
        <StatusBar />
      </div>
      <Dock />
    </div>
    <PagesPanel />
  </div>
);

export default App;
